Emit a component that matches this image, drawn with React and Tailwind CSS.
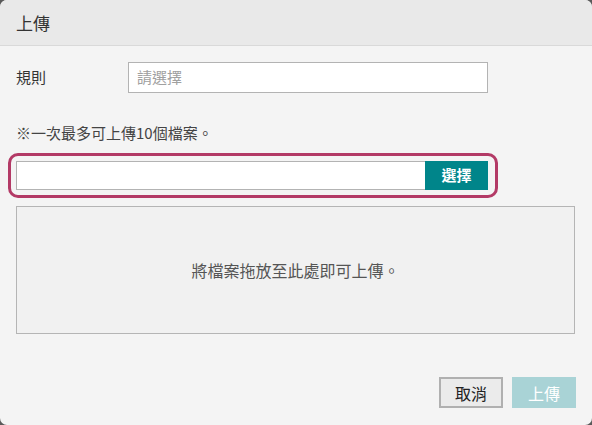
export default function App() {
  const font = { fontFamily: '"Noto Sans CJK TC", "Noto Sans", sans-serif' };
  return (
    <div className="w-[592px] h-[425px] bg-[#5a5a5a]" style={font}>
      <div className="w-full h-full rounded-[7px] overflow-hidden bg-[#f4f4f4] flex flex-col">
        <div className="h-[46px] shrink-0 bg-[#e9e9e9] border-b border-[#d9d9d9] flex items-center px-4 text-[17px] text-[#333]">
          上傳
        </div>

        <div className="flex-1 flex flex-col px-4">
          <div className="mt-4 flex items-center">
            <div className="w-[112px] text-[15px] text-[#333]">規則</div>
            <div className="w-[360px] h-[31px] bg-white border border-[#b3b3b3] flex items-center px-2 text-[15px] text-[#a0a0a0]">
              請選擇
            </div>
          </div>

          <div className="mt-[30px] h-5 flex items-center text-[15px] text-[#444]">
            ※一次最多可上傳10個檔案。
          </div>

          <div className="mt-[10px] -ml-2 w-[490px] h-[45px] border-[3px] border-[#b33a66] rounded-[10px] p-[5px] pr-[7px] flex">
            <div className="flex-1 bg-white border border-[#b3b3b3] border-r-0" />
            <div className="w-[63px] bg-[#00858a] text-white font-bold text-[15px] flex items-center justify-center">
              選擇
            </div>
          </div>

          <div className="mt-2 w-[559px] h-[128px] bg-[#f1f1f1] border border-[#b5b5b5] flex items-center justify-center text-[16px] text-[#555]">
            將檔案拖放至此處即可上傳。
          </div>

          <div className="mt-[43px] flex justify-end gap-[9px]">
            <button className="w-[64px] h-[31px] bg-[#ebebeb] border-2 border-[#b0b0b0] text-[16px] text-[#222] flex items-center justify-center">
              取消
            </button>
            <button className="w-[64px] h-[31px] bg-[#a9d3d6] text-white text-[16px] flex items-center justify-center">
              上傳
            </button>
          </div>
        </div>
      </div>
    </div>
  );
}
